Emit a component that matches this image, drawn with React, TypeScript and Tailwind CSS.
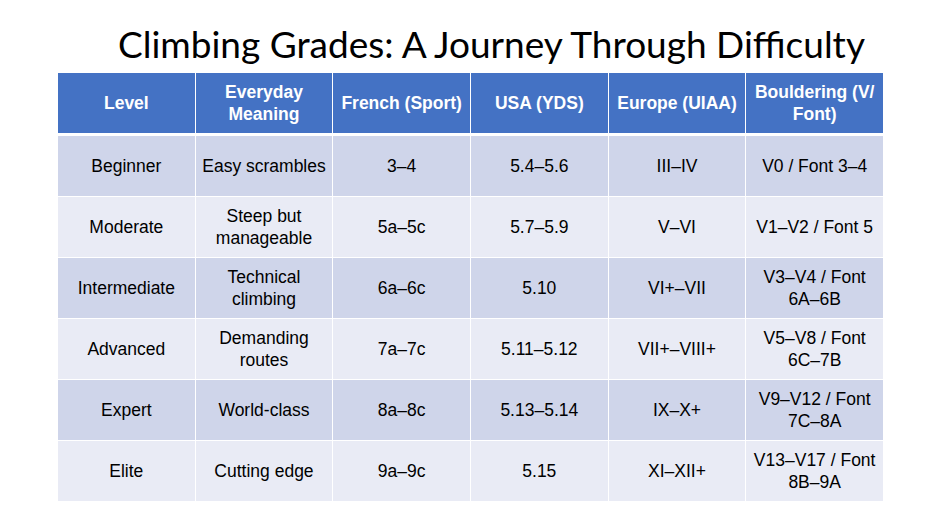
const headers = [
  'Level',
  'Everyday Meaning',
  'French (Sport)',
  'USA (YDS)',
  'Europe (UIAA)',
  'Bouldering (V/ Font)',
];

const rows: string[][] = [
  ['Beginner', 'Easy scrambles', '3–4', '5.4–5.6', 'III–IV', 'V0 / Font 3–4'],
  ['Moderate', 'Steep but manageable', '5a–5c', '5.7–5.9', 'V–VI', 'V1–V2 / Font 5'],
  ['Intermediate', 'Technical climbing', '6a–6c', '5.10', 'VI+–VII', 'V3–V4 / Font 6A–6B'],
  ['Advanced', 'Demanding routes', '7a–7c', '5.11–5.12', 'VII+–VIII+', 'V5–V8 / Font 6C–7B'],
  ['Expert', 'World-class', '8a–8c', '5.13–5.14', 'IX–X+', 'V9–V12 / Font 7C–8A'],
  ['Elite', 'Cutting edge', '9a–9c', '5.15', 'XI–XII+', 'V13–V17 / Font 8B–9A'],
];

export default function App() {
  return (
    <div className="h-[529px] w-[940px] overflow-hidden bg-white">
      <h1 className="pl-[118px] pt-[22px] font-['Lato',sans-serif] text-[37px] leading-[44px] text-black">
        Climbing Grades: A Journey Through Difficulty
      </h1>

      <div className="ml-[58px] mt-[7px] w-[825px] bg-white font-['Liberation_Sans',Arial,sans-serif] text-[17.5px] leading-[22px]">
        <div className="grid grid-cols-6 gap-px">
          {headers.map((h) => (
            <div
              key={h}
              className="flex h-[60px] items-center justify-center bg-[#4472c4] px-[6px] text-center font-bold text-white"
            >
              {h}
            </div>
          ))}
        </div>

        <div className="mt-[3px] grid grid-cols-6 gap-px">
          {rows.map((row, i) =>
            row.map((cell, j) => (
              <div
                key={`${i}-${j}`}
                className={`flex h-[60px] items-center justify-center px-[3px] text-center text-black ${
                  i % 2 === 0 ? 'bg-[#cfd5ea]' : 'bg-[#e9ebf5]'
                }`}
              >
                {cell}
              </div>
            )),
          )}
        </div>
      </div>
    </div>
  );
}
